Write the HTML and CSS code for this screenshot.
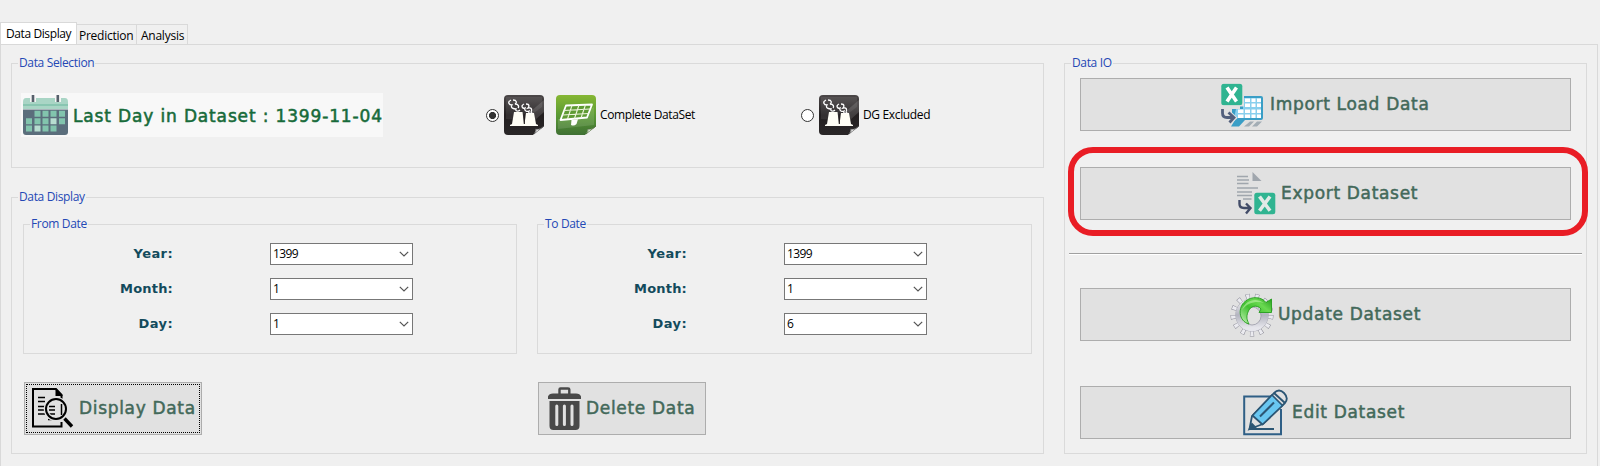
FILE: index.html
```html
<!DOCTYPE html>
<html lang="en">
<head>
<meta charset="utf-8">
<title>Dataset Manager</title>
<link rel="stylesheet" href="styles.css">
</head>
<body>
<svg class="defs" width="0" height="0">
  <defs>
    <linearGradient id="dark" x1="0" y1="0" x2="0" y2="1"><stop offset="0" stop-color="#4c4849"/><stop offset=".5" stop-color="#231f20"/><stop offset="1" stop-color="#2a2728"/></linearGradient>
    <linearGradient id="green" x1="0" y1="0" x2="0" y2="1"><stop offset="0" stop-color="#86b733"/><stop offset=".5" stop-color="#5a9a33"/><stop offset="1" stop-color="#3f7034"/></linearGradient>
    <linearGradient id="metal" x1="0" y1="0" x2="0" y2="1"><stop offset="0" stop-color="#e9e9ec"/><stop offset=".5" stop-color="#b3b4c0"/><stop offset="1" stop-color="#e6e6ec"/></linearGradient>
    <linearGradient id="arrow" x1="0" y1="1" x2="1" y2="0"><stop offset="0" stop-color="#c9f3bd"/><stop offset=".45" stop-color="#3fc12f"/><stop offset=".7" stop-color="#6ad951"/><stop offset="1" stop-color="#229a1b"/></linearGradient>
    <symbol id="plant" viewBox="0 0 40 40">
      <rect width="40" height="40" rx="4" fill="url(#dark)"/>
      <path d="M2 2H38V12Q22 26 2 24Z" fill="#fff" opacity=".08"/>
      <path d="M26 17L40 5V17L31 25Z" fill="#fff" opacity=".14"/>
      <path d="M10 17H18.500L20 29H20.500L22 18H30L32 29L34 30V31H6V30L8 29Z" fill="#fffef6"/>
      <path d="M20.300 19V29" stroke="#231f20" stroke-width="1"/>
      <path d="M7 5C3 7 5 10 8 10C6 13 10 14 12 14C11 16 14 17 16 15M9 5C13 5 13 8 11 9C15 9 15 12 14 13M20 9C16 11 19 14 21 13C20 16 23 17 25 16C24 19 27 19 28 17M22 9C26 9 25 12 24 13C28 12 28 15 27 17" fill="none" stroke="#fff" stroke-width="1.300"/>
      <path d="M29 40C32 37 32 34 31.500 34C35 35 38 33 40 31V40Z" fill="#f0f0f0"/>
      <path d="M30 39C33 36 32 34 31.500 34C35 35 38 33 40 31Z" fill="#fff" stroke="#555" stroke-width=".7"/>
    </symbol>
    <symbol id="excel" viewBox="0 0 22 22">
      <rect x=".3" y=".3" width="21" height="21.400" rx="2.500" fill="#30b491"/>
      <path d="M6 4L15.500 18M15.500 4L6 18" stroke="#fff" stroke-width="3.600"/>
    </symbol>
  </defs>
</svg>

<nav class="tabs">
  <div class="tab tab-active"><span class="t-tab1">Data Display</span></div>
  <div class="tab tab-pred"><span class="t-tab2">Prediction</span></div>
  <div class="tab tab-ana"><span class="t-tab3">Analysis</span></div>
</nav>

<main class="page">
  <section class="left">
    <fieldset class="group selection">
      <legend class="t-sel">Data Selection</legend>
      <div class="selection-row">
        <div class="last-day">
          <svg width="46" height="42" viewBox="0 0 46 42">
            <path d="M0 7Q0 3 3 3H42Q45 3 45 7V14H0Z" fill="#a9d5c5"/>
            <path d="M0 10H45" stroke="#6bb79d" stroke-width="1.200"/>
            <path d="M0 14.500H45V37Q45 40 42 40H3Q0 40 0 37Z" fill="#5b6e7c"/>
            <path d="M7 1H13V7H7ZM32 1H38V7H32Z" fill="#f5f5f5"/>
            <path d="M10 0V7M34.800 0V7" stroke="#56606b" stroke-width="2.600"/>
            <path d="M11.500 15.800h6v6h-6zM19.500 15.800h6v6h-6zM27.500 15.800h6v6h-6zM36 15.800h6v6h-6zM3 23.200h6v6h-6zM11.500 23.200h6v6h-6zM19.500 23.200h6v6h-6zM36 23.200h6v6h-6zM3 30.500h6v6h-6zM19.500 30.500h6v6h-6zM27.500 30.500h6v6h-6z" fill="#82c4ad"/>
            <path d="M27.500 23.200h6v6h-6zM11.500 30.500h6v6h-6z" fill="#b7ddd0"/>
          </svg>
          <span class="t-last">Last Day in Dataset : 1399-11-04</span>
        </div>
        <label class="choice choice-complete">
          <span class="radio radio-on"></span>
          <svg class="tile" width="40" height="40"><use href="#plant"/></svg>
          <svg class="tile solar" width="40" height="40" viewBox="0 0 40 40">
            <rect width="40" height="40" rx="4" fill="url(#green)"/>
            <path d="M2 24Q22 25 38 12V30Q20 32 2 34Z" fill="#fff" opacity=".12"/>
            <path d="M10 10.500L36 9.500L31 22.500L4.500 25Z" fill="#5f9b34" stroke="#fff" stroke-width="1.800" stroke-linejoin="round"/>
            <path d="M16 10.300L11.500 24M23 10L18.500 23.500M29.500 9.800L25 23M8 15.500L34 14M6.500 20L32.500 18.500" stroke="#eef5dc" stroke-width="1.100"/>
            <path d="M15.500 25L22 24.300L20.500 29Q18 31.500 15 30Z" fill="#fff"/>
            <path d="M29 40C32 37 32 34 31.500 34C35 35 38 33 40 31V40Z" fill="#f0f0f0"/>
            <path d="M30 39C33 36 32 34 31.500 34C35 35 38 33 40 31Z" fill="#fff" stroke="#4a6b35" stroke-width=".7"/>
          </svg>
          <span class="t-complete">Complete DataSet</span>
        </label>
        <label class="choice choice-dg">
          <span class="radio"></span>
          <svg class="tile" width="40" height="40"><use href="#plant"/></svg>
          <span class="t-dg">DG Excluded</span>
        </label>
      </div>
    </fieldset>

    <fieldset class="group display">
      <legend class="t-disp">Data Display</legend>
      <div class="dates">
        <fieldset class="group date">
          <legend class="t-from">From Date</legend>
          <div class="fields">
            <span class="name t-year">Year:</span><div class="combo"><span class="t-1399">1399</span><svg width="10" height="6" viewBox="0 0 10 6"><path d="M.8 .8L5 5L9.200 .8"/></svg></div>
            <span class="name t-month">Month:</span><div class="combo"><span>1</span><svg width="10" height="6" viewBox="0 0 10 6"><path d="M.8 .8L5 5L9.200 .8"/></svg></div>
            <span class="name t-day">Day:</span><div class="combo"><span>1</span><svg width="10" height="6" viewBox="0 0 10 6"><path d="M.8 .8L5 5L9.200 .8"/></svg></div>
          </div>
        </fieldset>
        <fieldset class="group date">
          <legend class="t-to">To Date</legend>
          <div class="fields">
            <span class="name t-year">Year:</span><div class="combo"><span class="t-1399">1399</span><svg width="10" height="6" viewBox="0 0 10 6"><path d="M.8 .8L5 5L9.200 .8"/></svg></div>
            <span class="name t-month">Month:</span><div class="combo"><span>1</span><svg width="10" height="6" viewBox="0 0 10 6"><path d="M.8 .8L5 5L9.200 .8"/></svg></div>
            <span class="name t-day">Day:</span><div class="combo"><span>6</span><svg width="10" height="6" viewBox="0 0 10 6"><path d="M.8 .8L5 5L9.200 .8"/></svg></div>
          </div>
        </fieldset>
      </div>
      <div class="actions">
        <button class="btn btn-display">
          <svg width="42" height="42" viewBox="0 0 42 42">
            <path d="M29.500 34V38.500H1V1H24L29.500 7V11" fill="none" stroke="#000" stroke-width="2"/>
            <path d="M23.500 0L30.500 7V8H23.500Z"/>
            <path d="M6 9.500H13M6 13.500H13M6 18.500H13M6 22H13M6 26H13M17 18.500H23M17 22H23M17 26H23M16 31.500H20" stroke="#000" stroke-width="1.500"/>
            <circle cx="24" cy="21" r="10" fill="none" stroke="#e1e1e1" stroke-width="4.500"/>
            <circle cx="24" cy="21" r="10" fill="none" stroke="#000" stroke-width="2"/>
            <path d="M29.500 16V27" stroke="#000" stroke-width="1.500"/>
            <path d="M32.500 30.500L40 38.500" stroke="#000" stroke-width="3.300"/>
          </svg>
          <span class="t-bdisp">Display Data</span>
        </button>
        <button class="btn btn-delete">
          <svg width="33" height="44" viewBox="0 0 33 44">
            <path d="M11.500 7V2.500Q11.500 1.500 12.500 1.500H20Q21.300 1.500 21.300 2.500V7" fill="none" stroke="#494949" stroke-width="2.400"/>
            <path d="M0 12V9.500Q1 6.500 5 6.500H28Q32 6.500 33 9.500V12ZM1.500 14H31.500V39Q31.500 43 27.500 43H5.500Q1.500 43 1.500 39Z" fill="#494949"/>
            <path d="M8.800 19V37.500M16.400 19V37.500M24 19V37.500" stroke="#e1e1e1" stroke-width="3" stroke-linecap="round"/>
          </svg>
          <span class="t-bdel">Delete Data</span>
        </button>
      </div>
    </fieldset>
  </section>

  <fieldset class="group io">
    <legend class="t-io">Data IO</legend>
    <button class="btn btn-import">
      <svg width="43" height="44" viewBox="0 0 43 44">
        <path d="M19 13H40Q42 13 42 15V35Q42 37 40 37H24L18 43.500H10L14 37L11 36V26H19Z" fill="#3a9ec6"/>
        <path d="M22 15H40V35H13L15 26H22Z" fill="#88cfed"/>
        <path d="M24 15.500h5v3.500h-5zM30.500 15.500h4v3.500h-4zM36 15.500h4v3.500h-4zM24 20.500h5v3.500h-5zM30.500 20.500h4v3.500h-4zM36 20.500h4v3.500h-4zM17 26.500h5.500v3.500h-5.500zM24 26.500h5v3.500h-5zM30.500 26.500h4v3.500h-4zM36 26.500h4v3.500h-4zM17 31.500h5.500v3.500h-5.500zM24 31.500h5v3.500h-5zM30.500 31.500h4v3.500h-4zM36 31.500h4v3.500h-4z" fill="#fff"/>
        <path d="M23 43.500L29 38.500H33L28 43.500ZM31 43.500L36 38.500H41L36 43.500Z" fill="#a3adb5"/>
        <path d="M2 26V30Q2 35 7 35H12M8 30L13 35L8 39.500" fill="none" stroke="#e1e1e1" stroke-width="5"/>
        <path d="M1.500 26V30Q1.500 34.500 6 34.500H12M7.500 29.500L13 34.500L8.500 39.500" fill="none" stroke="#53607d" stroke-width="2.800"/>
        <rect width="23" height="23.500" fill="#e1e1e1"/>
        <use href="#excel" x="0" y="0.500" width="22" height="22"/>
      </svg>
      <span class="t-import">Import Load Data</span>
    </button>
    <button class="btn btn-export">
      <svg width="39" height="44" viewBox="0 0 39 44">
        <path d="M0 4.500H11M0 8H12M0 11.500H11.500M0 16H21M0 20H15M0 23.500H15M6 27H14.500" stroke="#a0a6ad" stroke-width="1.600"/>
        <path d="M15.500 0L24.500 9H15.500Z" fill="#a0a6ad"/>
        <path d="M2.500 28V32Q2.500 36 7 36H13M9 31.500L13.500 36L9 41.500" fill="none" stroke="#424c68" stroke-width="2.400"/>
        <rect x="17.300" y="20.800" width="21" height="21.500" rx="2.500" fill="#30b491"/>
        <path d="M22.500 24.500L33 38.800M33 24.500L22.500 38.800" stroke="#e1eae6" stroke-width="3.600"/>
      </svg>
      <span class="t-export">Export Dataset</span>
      <i class="ring"></i>
    </button>
    <hr class="rule">
    <button class="btn btn-update">
      <svg width="44" height="46" viewBox="0 0 44 46">
        <circle cx="22" cy="23" r="18.500" fill="none" stroke="#8f8f9a" stroke-width="6" stroke-dasharray="4 4.942"/>
        <circle cx="22" cy="23" r="18" fill="none" stroke="#ebebf0" stroke-width="6" stroke-dasharray="3 5.700" stroke-dashoffset="-.5"/>
        <circle cx="22" cy="23" r="12.800" fill="none" stroke="#a2a2ae" stroke-width="7.600"/>
        <circle cx="22" cy="23" r="12.800" fill="none" stroke="url(#metal)" stroke-width="7"/>
        <circle cx="22" cy="24" r="9" fill="#e1e1e1" stroke="#9d9da9" stroke-width=".8"/>
        <path d="M19 32C8 29 8 15 15 9.500C22 3.500 32 5 36 10.500L41.500 7V20.500H29L31 17C27 12 20 14 18 20C16 25 17 28 19 32Z" fill="url(#arrow)" stroke="#259d1d" stroke-width=".9"/>
        <path d="M12 18C15 8 26 5 34 11C27 9 18 10 12 18Z" fill="#c5f5ae" opacity=".55"/>
      </svg>
      <span class="t-update">Update Dataset</span>
    </button>
    <button class="btn btn-edit">
      <svg width="46" height="47" viewBox="0 0 46 47">
        <path d="M29 7.500H1.200V45.300H38V20" fill="none" stroke="#2f5f86" stroke-width="2"/>
        <path d="M6.500 40L9 27L31 4Q36 -1 41 4Q46 9 42 14L20 35Z" fill="#e1e1e1" stroke="#2c5674" stroke-width="1.800" stroke-linejoin="round"/>
        <path d="M9.500 26.500L29 6L39.500 16.500L19.500 35.500Z" fill="#69c7f1" stroke="#2c5674" stroke-width="1.700" stroke-linejoin="round"/>
        <path d="M31 4L42 14" stroke="#2c5674" stroke-width="2"/>
        <path d="M17 27.500L31 13.500" stroke="#2c5674" stroke-width="2"/>
        <path d="M9 35L12 38L6.500 40ZM6.500 40H31" fill="#2c5674" stroke="#2c5674" stroke-width="1.900"/>
      </svg>
      <span class="t-edit">Edit Dataset</span>
    </button>
  </fieldset>
</main>
</body>
</html>
```

FILE: styles.css
```css
* { box-sizing: border-box; }
body {
  margin: 0;
  width: 1600px;
  height: 466px;
  overflow: hidden;
  background: #f0f0f0;
  color: #000;
  font: 12px/17px "Open Sans", "Noto Sans", sans-serif;
  letter-spacing: -0.35px;
}
svg { display: block; flex: none; overflow: visible; }
span { white-space: nowrap; }
.defs { height: 0; }

/* Tab strip */
.tabs { display: flex; align-items: flex-end; height: 44px; }
.tab {
  height: 20px;
  padding: 2px 0 0 2px;
  border: 1px solid #d9d9d9;
  border-left: 0;
  border-bottom: 0;
}
.tab-active {
  width: 77px;
  height: 22px;
  padding: 2px 0 0 5px;
  border-left: 1px solid #d9d9d9;
  background: #fff;
  letter-spacing: -0.4px;
}
.tab-pred { width: 60px; letter-spacing: -0.25px; }
.tab-ana { width: 51px; padding-left: 4px; letter-spacing: -0.25px; }

.page {
  display: flex;
  align-items: flex-start;
  gap: 20px;
  width: 1598px;
  height: 422px;
  padding: 10px;
  border: 1px solid #d9d9d9;
  border-bottom: 0;
}

/* Group boxes */
.group { margin: 0; padding: 0; border: 1px solid #dadada; min-width: 0; }
.group > legend { height: 17px; margin-left: 6px; padding: 0 1px; line-height: 15px; color: #2448b5; }
.left { display: flex; flex: none; flex-direction: column; gap: 21px; width: 1033px; }
.selection { width: 1033px; height: 113px; }
.display { height: 265px; }

.selection-row { display: flex; align-items: center; height: 44px; margin: 21px 0 0 9px; }
.last-day {
  display: flex;
  align-items: center;
  width: 362px;
  height: 44px;
  padding: 1px 0 0 2px;
  background: #f8f8f8;
  color: #176b3a;
}
.last-day span {
  margin-left: 4px;
  font: 17px/24px "DejaVu Sans", Verdana, sans-serif;
  letter-spacing: .85px;
  -webkit-text-stroke: .55px;
}
.choice { display: flex; align-items: center; }
.choice-complete { width: 315px; margin-left: 103px; }
.radio {
  flex: none;
  width: 13px;
  height: 13px;
  margin-right: 5px;
  border: 1px solid #333;
  border-radius: 50%;
  background: #fff;
}
.radio-on { background: radial-gradient(circle, #333 0 3.2px, #fff 3.9px); }
.solar { margin-left: 12px; }
.choice span:last-child { margin-left: 4px; padding-bottom: 1px; }
.choice-complete span:last-child { letter-spacing: -0.38px; }

.dates { display: flex; gap: 20px; margin: 10px 0 0 11px; }
.date { width: 494px; height: 138px; }
.date + .date { width: 495px; }
.fields {
  display: grid;
  grid-template-columns: 149px 143px;
  column-gap: 97px;
  row-gap: 13px;
  margin-top: 10px;
}
.name {
  justify-self: end;
  color: #134b5c;
  font: bold 13px/21px "DejaVu Sans", Verdana, sans-serif;
  letter-spacing: .4px;
}
.t-month { letter-spacing: .2px; }
.combo {
  display: flex;
  align-items: center;
  justify-content: space-between;
  height: 22px;
  padding: 0 3px 0 2px;
  border: 1px solid #777;
  background: #fff;
}
.combo span { padding-bottom: 1px; letter-spacing: -0.6px; }
.combo path { fill: none; stroke: #555; stroke-width: 1.2; }

.actions { display: flex; gap: 336px; margin: 28px 0 0 12px; }
.btn {
  position: relative;
  display: flex;
  align-items: center;
  height: 53px;
  margin: 0;
  padding: 0;
  border: 1px solid #adadad;
  background: #e1e1e1;
  color: #43695a;
}
.btn span {
  font: 17px/23px "DejaVu Sans", Verdana, sans-serif;
  letter-spacing: .68px;
  -webkit-text-stroke: .5px;
}
.btn-display { width: 178px; padding-left: 7px; outline: 1px dotted #000; outline-offset: -3px; }
.btn-display span { margin-left: 5px; }
.btn-delete { width: 168px; padding-left: 9px; }
.btn-delete span { margin-left: 5px; }

/* Data IO column */
.io { flex: none; width: 523px; height: 399px; }
.io .btn { width: 491px; margin-left: 15px; }
.io .btn span { margin-left: 6px; }
.btn-import { margin-top: 6px; }
.io .btn-import { padding-left: 140px; }
.io .btn-export { margin-top: 36px; padding-left: 156px; }
.io .btn-export span { margin-left: 5px; }
.io .btn-update { margin-top: 33px; padding-left: 149px; }
.io .btn-update span { margin-left: 4px; }
.io .btn-edit { margin-top: 45px; padding-left: 162px; }
.io .btn-edit span { margin-left: 3px; }
.rule { width: 513px; height: 2px; margin: 33px 0 0 4px; border: 0; border-top: 1px solid #a0a0a0; background: #fff; }
.ring {
  position: absolute;
  left: -13px;
  top: -21px;
  width: 520px;
  height: 89px;
  border: 6px solid #e91d25;
  border-radius: 25px;
}
```
